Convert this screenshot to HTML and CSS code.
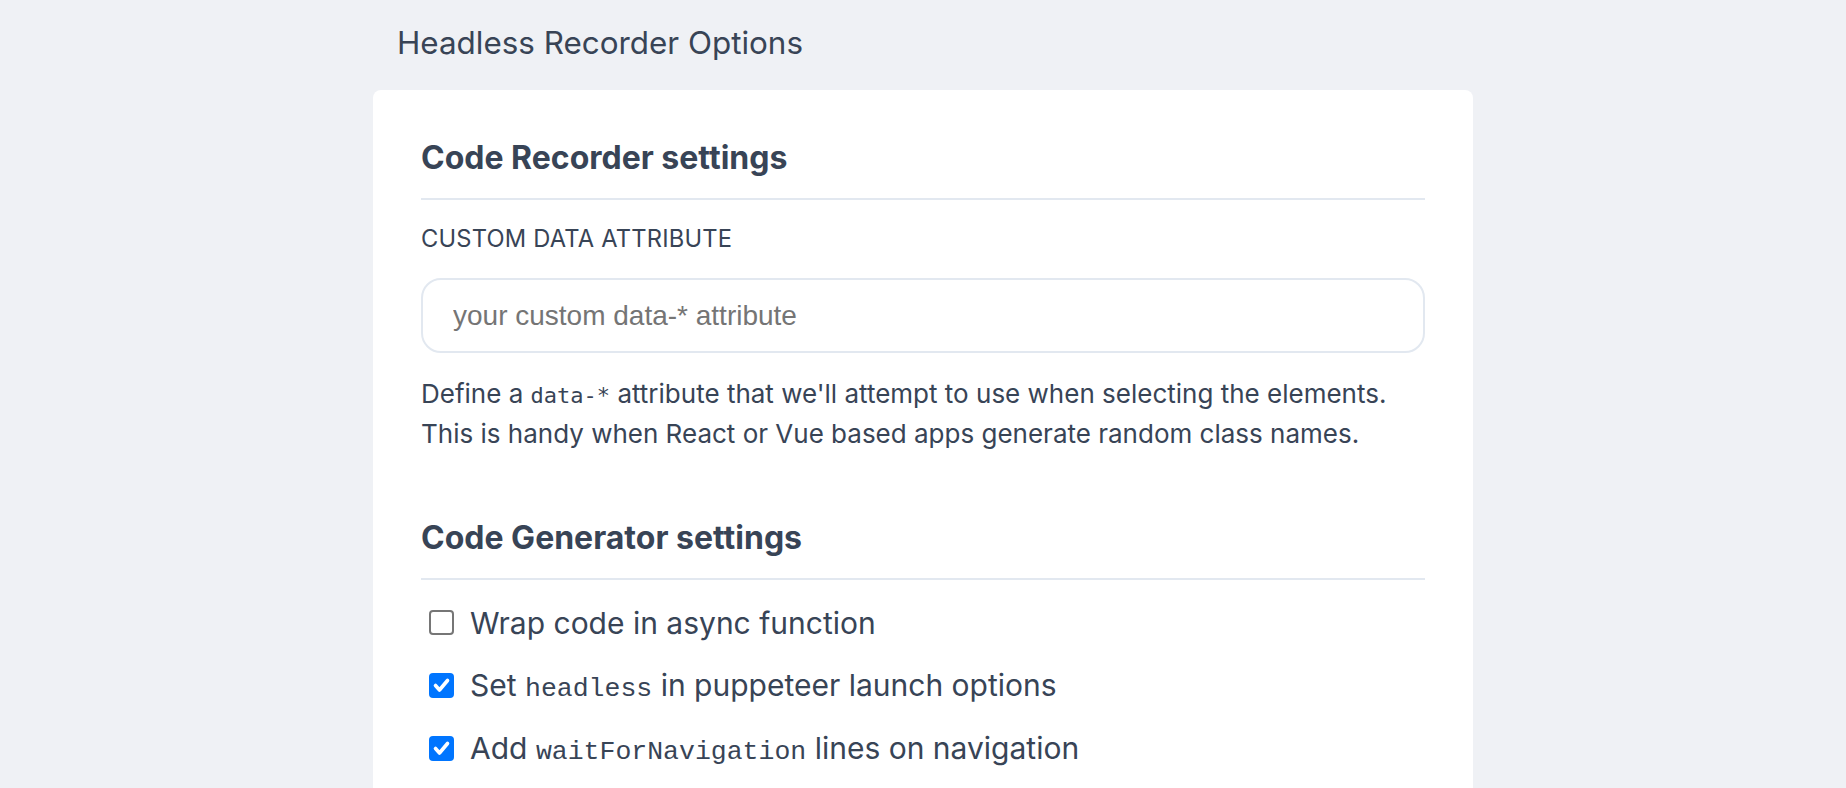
FILE: index.html
```html
<!DOCTYPE html>
<html lang="en">
<head>
<meta charset="utf-8">
<title>Headless Recorder Options</title>
<link rel="stylesheet" href="styles.css">
</head>
<body>
<div class="page">
  <h1 class="page-title">Headless Recorder Options</h1>
  <div class="card">
    <section class="section">
      <h2 class="section-title">Code Recorder settings</h2>
      <label class="field-label" for="dataAttr">CUSTOM DATA ATTRIBUTE</label>
      <input id="dataAttr" class="text-input" type="text" placeholder="your custom data-* attribute">
      <p class="help">Define a <code class="help-code">data-*</code> attribute that we'll attempt to use when selecting the elements.<br>This is handy when React or Vue based apps generate random class names.</p>
    </section>
    <section class="section gen">
      <h2 class="section-title">Code Generator settings</h2>
      <ul class="options">
        <li class="option"><input type="checkbox" class="check" id="o1"><label for="o1">Wrap code in async function</label></li>
        <li class="option"><input type="checkbox" class="check" id="o2" checked><label for="o2">Set <code class="lbl-code">headless</code> in puppeteer launch options</label></li>
        <li class="option"><input type="checkbox" class="check" id="o3" checked><label for="o3">Add <code class="lbl-code">waitForNavigation</code> lines on navigation</label></li>
      </ul>
    </section>
  </div>
</div>
</body>
</html>
```
FILE: styles.css
```css
html, body {
  margin: 0;
  padding: 0;
}
body {
  background: #eff1f5;
  font-family: Inter, "Noto Sans", sans-serif;
  color: #384456;
}
.page {
  width: 1100px;
  margin: 0 auto;
}
.page-title {
  margin: 0;
  padding: 23px 0 0 24px;
  font-size: 31.4px;
  line-height: 40px;
  font-weight: 400;
}
.card {
  margin-top: 27px;
  background: #ffffff;
  border-radius: 8px;
  padding: 50px 48px 120px 48px;
}
.section {
  display: flex;
  flex-direction: column;
}
.section-title {
  margin: 0;
  font-size: 32px;
  line-height: 36px;
  font-weight: 700;
  padding-bottom: 22px;
  border-bottom: 2px solid #e2e8f0;
}
.field-label {
  margin-top: 24px;
  font-size: 23.7px;
  line-height: 30px;
  letter-spacing: 0.2px;
}
.text-input {
  margin-top: 24px;
  height: 75px;
  box-sizing: border-box;
  border: 2px solid #e2e8f0;
  border-radius: 20px;
  padding: 0 30px;
  font-family: "Liberation Sans", Arial, sans-serif;
  font-size: 28px;
  color: #384456;
  outline: none;
}
.text-input::placeholder {
  color: #757575;
}
.help {
  margin: 22px 0 0 0;
  font-size: 26px;
  line-height: 38px;
}
.help-code {
  font-family: "DejaVu Sans Mono", monospace;
  font-size: 22px;
}
.gen {
  margin-top: 67px;
}
.options {
  list-style: none;
  margin: 11px 0 0 0;
  padding: 0;
}
.option {
  display: flex;
  align-items: center;
  height: 63px;
  font-size: 30px;
}
.check {
  appearance: none;
  -webkit-appearance: none;
  margin: 0 16px 0 8px;
  width: 25px;
  height: 25px;
  box-sizing: border-box;
  border: 2px solid #767676;
  border-radius: 4px;
  background: #ffffff;
  flex: none;
}
.check:checked {
  border: none;
  background-color: #0075ff;
  background-image: url("data:image/svg+xml;utf8,<svg xmlns='http://www.w3.org/2000/svg' viewBox='0 0 25 25'><path d='M6.5 12.5 L10.5 17 L18.5 7.5' fill='none' stroke='white' stroke-width='3.6' stroke-linecap='round' stroke-linejoin='round'/></svg>");
  background-size: 25px 25px;
}
.lbl-code {
  font-family: "Liberation Mono", "Courier New", monospace;
  font-size: 26.5px;
}
```
